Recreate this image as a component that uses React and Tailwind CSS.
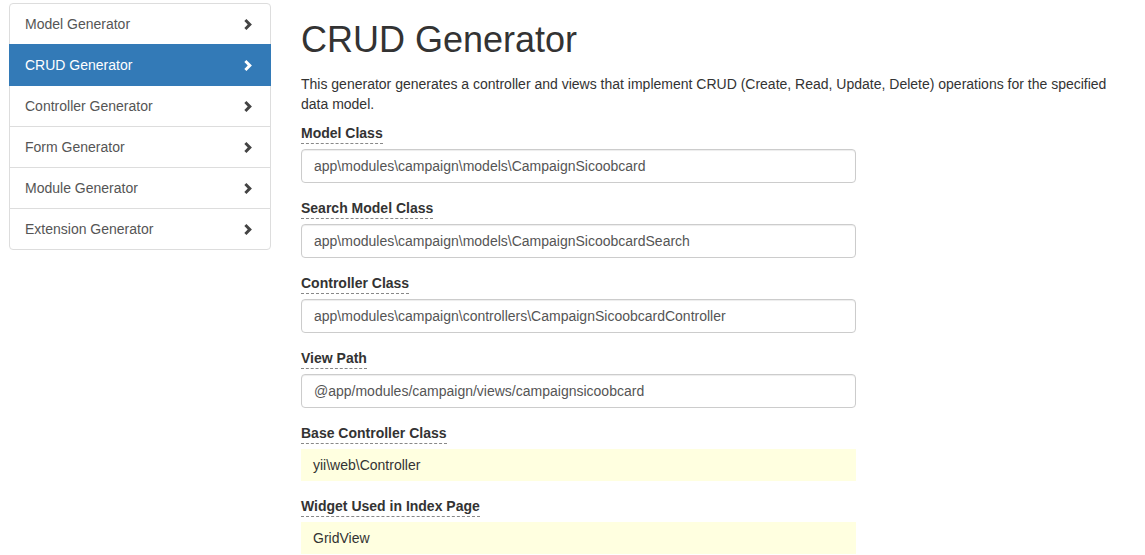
const GENERATORS = [
  'Model Generator',
  'CRUD Generator',
  'Controller Generator',
  'Form Generator',
  'Module Generator',
  'Extension Generator',
];

const FIELDS = [
  { label: 'Model Class', value: 'app\\modules\\campaign\\models\\CampaignSicoobcard' },
  { label: 'Search Model Class', value: 'app\\modules\\campaign\\models\\CampaignSicoobcardSearch' },
  { label: 'Controller Class', value: 'app\\modules\\campaign\\controllers\\CampaignSicoobcardController' },
  { label: 'View Path', value: '@app/modules/campaign/views/campaignsicoobcard' },
  { label: 'Base Controller Class', value: 'yii\\web\\Controller', sticky: true },
  { label: 'Widget Used in Index Page', value: 'GridView', sticky: true },
];

function Chevron() {
  return (
    <svg width="11" height="11" viewBox="0 0 10 10" className="shrink-0">
      <polygon points="1.2,1.9 3.1,0 8.1,5 3.1,10 1.2,8.1 4.3,5" fill="currentColor" />
    </svg>
  );
}

function Sidebar() {
  return (
    <div className="mt-[3px] flex w-[262px] shrink-0 flex-col">
      {GENERATORS.map((name, i) => {
        const active = name === 'CRUD Generator';
        return (
          <a
            key={name}
            href="#"
            className={[
              'flex items-center justify-between border px-[15px] py-[10px] leading-[20px]',
              i > 0 ? '-mt-px' : '',
              i === 0 ? 'rounded-t-[4px]' : '',
              i === GENERATORS.length - 1 ? 'rounded-b-[4px]' : '',
              active
                ? 'relative z-10 border-[#337ab7] bg-[#337ab7] text-white'
                : 'border-[#ddd] bg-white text-[#555]',
            ].join(' ')}
          >
            <span>{name}</span>
            <span className={active ? 'mr-[1px] text-white' : 'mr-[1px] text-[#444]'}>
              <Chevron />
            </span>
          </a>
        );
      })}
    </div>
  );
}

function Field({ label, value, sticky }) {
  return (
    <div className="mb-[15px] flex flex-col items-start">
      <label className="mb-[5px] inline-block border-b border-dashed border-[#888] font-bold leading-[20px] text-[#333]">
        {label}
      </label>
      {sticky ? (
        <div className="w-[555px] bg-[#ffffe0] px-[12px] py-[6px] leading-[20px] text-[#333]">
          {value}
        </div>
      ) : (
        <div className="h-[34px] w-[555px] rounded-[4px] border border-[#ccc] bg-white px-[12px] py-[6px] leading-[20px] text-[#555] shadow-[inset_0_1px_1px_rgba(0,0,0,0.075)]">
          {value}
        </div>
      )}
    </div>
  );
}

export default function App() {
  return (
    <div
      className="flex h-[555px] gap-[30px] overflow-hidden bg-white pl-[9px] text-[14px] text-[#333]"
      style={{ fontFamily: '"Liberation Sans", Arial, sans-serif' }}
    >
      <Sidebar />
      <div className="flex w-[830px] flex-col">
        <h1 className="mt-[20px] mb-[14px] text-[36px] leading-[40px] font-normal text-[#333]">
          CRUD Generator
        </h1>
        <p className="mb-[9px] leading-[20px]">
          This generator generates a controller and views that implement CRUD (Create, Read, Update,
          Delete) operations for the specified data model.
        </p>
        {FIELDS.map((f) => (
          <Field key={f.label} {...f} />
        ))}
      </div>
    </div>
  );
}
